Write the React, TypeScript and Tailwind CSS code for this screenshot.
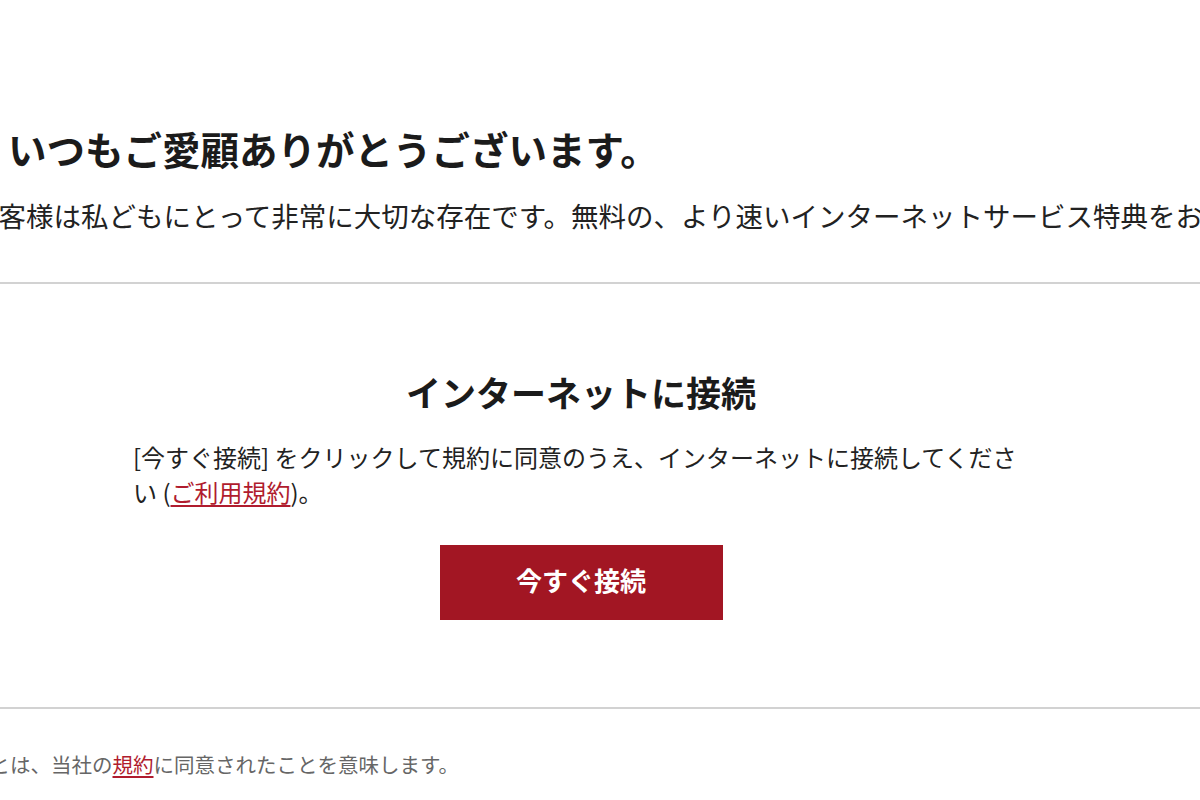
import React from "react";

const fontStack = "font-['Noto_Sans_CJK_JP',sans-serif]";

const Header = () => {
    return (
        <div className="pt-[122px]">
            <h1 className="ml-[8px] whitespace-nowrap text-[38.5px] font-bold leading-[52px] text-[#1b1b1b]">
                いつもご愛顧ありがとうございます。
            </h1>
            <p className="mt-[21px] ml-[-29px] whitespace-nowrap text-[27.5px] leading-[40px] text-[#222]">
                お客様は私どもにとって非常に大切な存在です。無料の、より速いインターネットサービス特典をお楽しみください。
            </p>
        </div>
    );
};

const ConnectSection = () => {
    return (
        <div className="ml-[133px] w-[896px] pt-[84px] pb-[87px]">
            <h2 className="text-center text-[35px] font-bold leading-[48px] text-[#1b1b1b]">
                インターネットに接続
            </h2>
            <p className="mt-[23px] text-[24px] leading-[35px] text-[#222]">
                [今すぐ接続] をクリックして規約に同意のうえ、インターネットに接続してください (
                <a href="#" className="text-[#b01c2e] underline underline-offset-[3px]">
                    ご利用規約
                </a>
                )。
            </p>
            <div className="mt-[36px] flex justify-center">
                <button className="flex h-[75px] w-[283px] items-center justify-center bg-[#a21623] pb-[6px] text-[26px] font-bold text-white">
                    今すぐ接続
                </button>
            </div>
        </div>
    );
};

const Footer = () => {
    return (
        <div className="pt-[40px]">
            <p className="ml-[-31px] whitespace-nowrap text-[20.5px] leading-[30px] text-[#666]">
                ことは、当社の
                <a href="#" className="text-[#b01c2e] underline underline-offset-[3px]">
                    規約
                </a>
                に同意されたことを意味します。
            </p>
        </div>
    );
};

export default function App() {
    return (
        <div className={`h-[800px] w-full overflow-hidden bg-white ${fontStack}`}>
            <Header />
            <div className="mt-[47px] h-[2px] w-full bg-[#d2d2d2]" />
            <ConnectSection />
            <div className="h-[2px] w-full bg-[#d2d2d2]" />
            <Footer />
        </div>
    );
}
